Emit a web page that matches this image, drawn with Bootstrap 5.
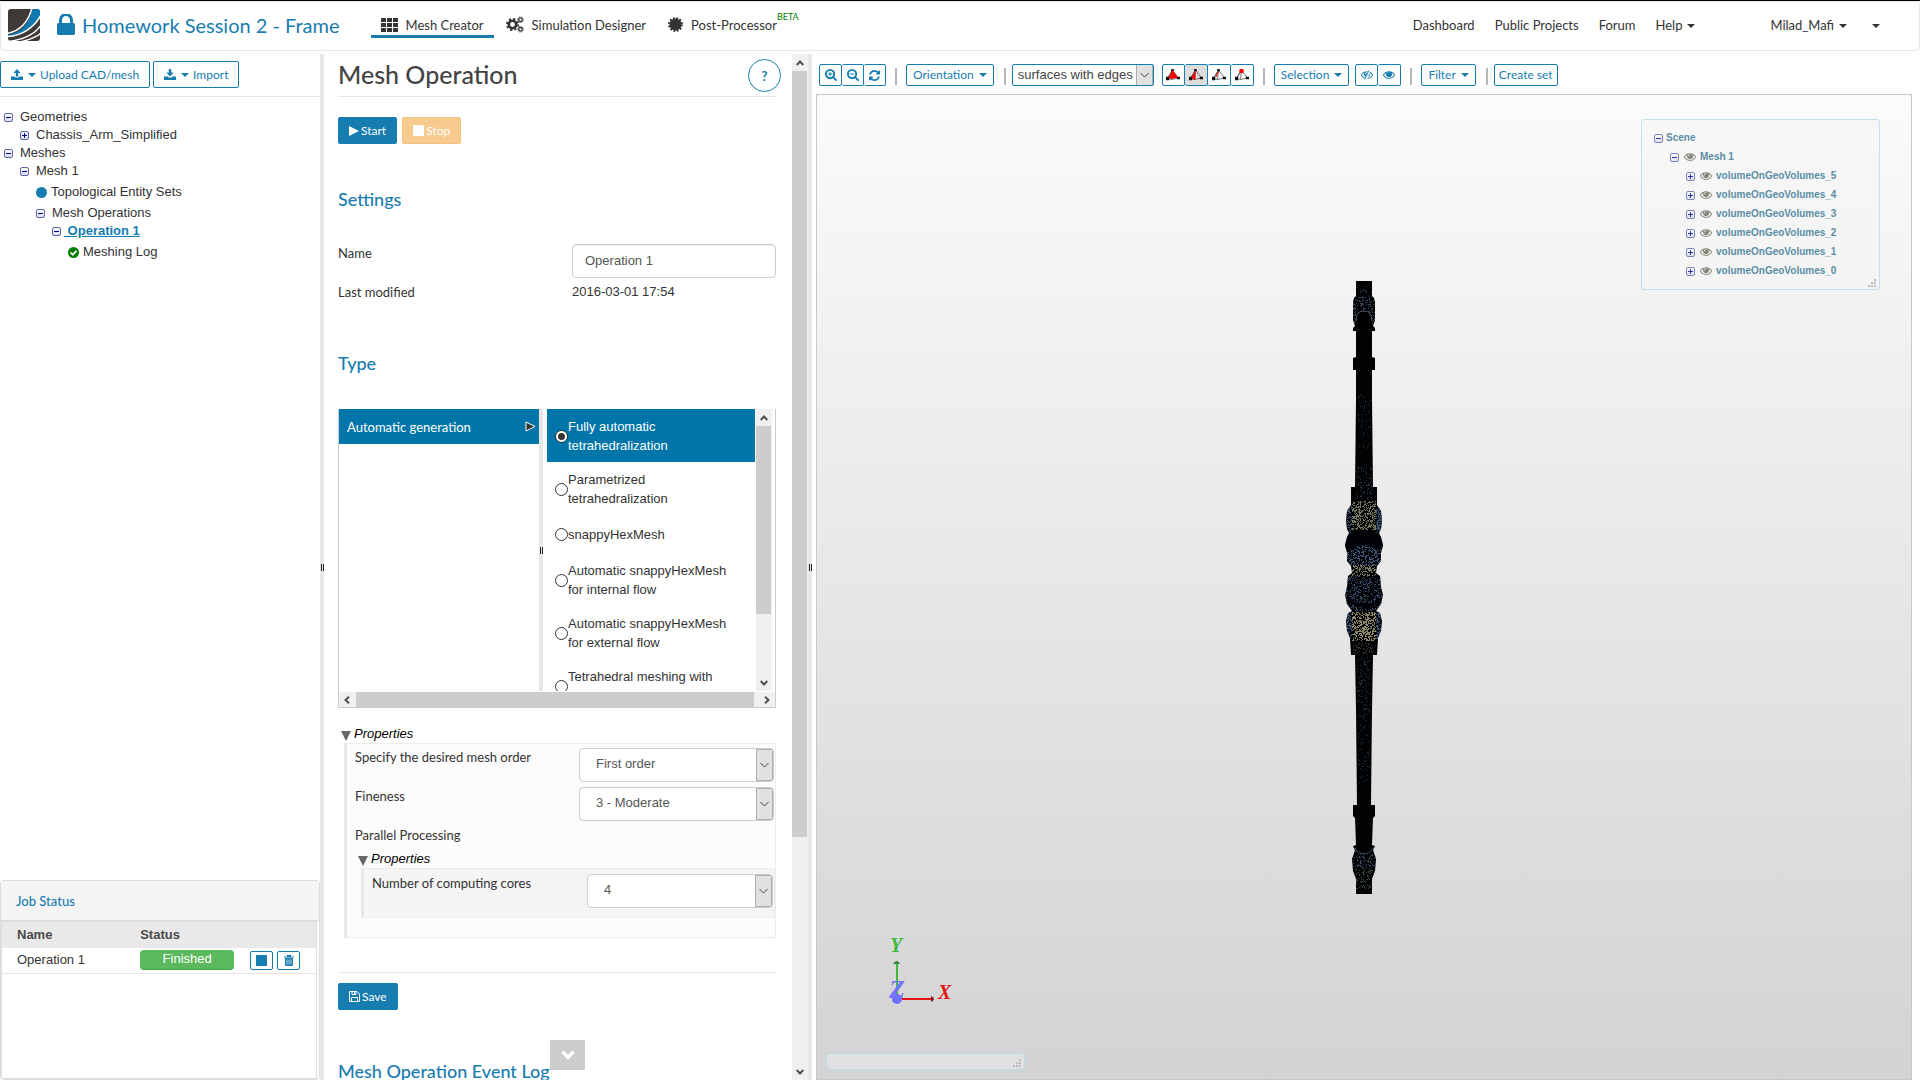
<!DOCTYPE html>
<html lang="en">
<head>
<meta charset="utf-8">
<meta name="viewport" content="width=device-width, initial-scale=1">
<title>Homework Session 2 - Frame</title>
<link href="https://cdn.jsdelivr.net/npm/bootstrap@5.3.0/dist/css/bootstrap.min.css" rel="stylesheet">
<style>
:root { --sim: #177cb0; --line: #e7e7e7; --sel: #0075a9; }
body { font: 13px/18px "Liberation Sans", Arial, sans-serif; color: #333; height: 100vh; overflow: hidden; border-top: 1px solid #000; }
.lato, .lato .nav-link, .tool { font-family: Lato, sans-serif; }
a { color: var(--sim); }
svg { display: block; flex: none; fill: currentColor; }

/* header */
.topbar { height: 50px; border: 1px solid var(--line); border-radius: 4px; padding: 0 29px 2px 7px; }
.brand-title { font-size: 20px; line-height: 24px; color: var(--sim); text-decoration: none; gap: 7px; margin: 0 31px 0 17px; padding-bottom: 1px; }
.topbar .nav-link { color: #333; font-size: 13px; line-height: 20px; padding: 0 10px; }
.topbar .modes { gap: 2px; }
.topbar .modes .nav-link { display: flex; align-items: center; gap: 8px; height: 35px; padding-top: 11px; margin-top: 1px; border-bottom: 3px solid transparent; }
.topbar .modes .nav-link.active { border-color: var(--sim); }
.beta-tag { font-size: 9px; line-height: 10px; color: green; margin: -16px 0 0 -8px; }
.tri::after { content: ""; display: inline-block; margin-left: 5px; vertical-align: 2px; border: 4px solid transparent; border-top-color: currentColor; border-bottom: 0; }
.user-nav { margin-left: 55px; }

/* workspace */
.workspace { display: grid; grid-template-columns: 320px 4px 484px 4px minmax(0, 1fr); flex: 1 1 0; min-height: 0; margin-top: 3px; }
.divider { background: var(--line); display: flex; align-items: center; justify-content: center; }
.divider::after { content: ""; width: 3px; height: 7px; border: solid #222; border-width: 0 1px; }

.tool { font-size: 12px; line-height: 18px; border: 1px solid var(--sim); border-radius: 2px; color: var(--sim); background: #fff; padding: 0 6px; display: inline-flex; align-items: center; justify-content: center; }
.tool.big { height: 27px; padding: 0 10px; }
.tool.solid { background: var(--sim); color: #fff; gap: 2px; }
.tool.warn { background: #f7ca8d; border-color: #f5c37f; color: #fff; gap: 2px; }

/* project tree */
.tree-tools { height: 43px; padding-top: 7px; gap: 3px; border-bottom: 1px solid var(--line); }
.tree-tools .tool { gap: 4px; }
.tree-tools .tri::after { margin-left: 1px; }
.tree { list-style: none; margin: 0; padding: 0 0 0 16px; }
.tree.root { padding: 11px 0 0 4px; }
.tree .line { display: flex; align-items: center; height: 18px; gap: 7px; }
.tree .line.leaf { height: 24px; gap: 4px; }
.tree .line.current { gap: 3px; }
.toggle { width: 9px; height: 9px; flex: none; padding: 0; border: 1px solid #5a68b0; border-radius: 2px; background: linear-gradient(#00009c, #00009c) center / 5px 1px no-repeat, linear-gradient(#fff, #d8dcee); margin-top: 1px; }
.toggle.plus { background: linear-gradient(#00009c, #00009c) center / 5px 1px no-repeat, linear-gradient(#00009c, #00009c) center / 1px 5px no-repeat, linear-gradient(#fff, #d8dcee); }

/* job list */
.jobs { height: 200px; border: 1px solid #ddd; border-radius: 4px; }
.jobs h2 { font-size: 13px; line-height: 20px; color: var(--sim); background: #f5f5f5; height: 40px; margin: 0; padding: 10px 15px; border-bottom: 1px solid #ddd; }
.jobs .frame { border: 1px solid #ddd; margin-right: 2px; flex: 1; }
.jobs table { width: 100%; table-layout: fixed; }
.jobs th { height: 26px; background: #e9e9e9; color: #4a4a4a; padding: 0 0 0 15px; }
.jobs th:first-child { width: 44%; }
.jobs th:nth-child(2) { width: 35%; }
.jobs td { height: 25px; padding: 0 0 0 15px; border-bottom: 1px solid var(--line); }
.jobs th + th, .jobs td + td { padding-left: 0; }
.done-tag { display: block; width: 94px; height: 20px; line-height: 18px; border-radius: 4px; background: #5cb85c; border-bottom: 1px solid #43a047; color: #fff; text-align: center; }
.jobs .tool { height: 19px; width: 23px; padding: 0; }

/* settings form */
.form-pane { flex: 1 1 0; min-width: 0; overflow: hidden; padding: 0 16px 0 14px; position: relative; }
.form-pane h1 { font-size: 25px; line-height: 30px; margin: 0; color: #444; }
.titlebar { height: 43px; border-bottom: 1px solid var(--line); padding-top: 5px; }
.help { width: 33px; height: 33px; border-radius: 50%; border: 1px solid var(--sim); background: #fff; color: var(--sim); font-size: 13px; font-weight: 700; padding: 0; margin-right: -5px; }
.form-pane h2 { font-size: 18px; line-height: 22px; margin: 0; color: var(--sim); }
.run-row { margin-top: 20px; gap: 5px; }
.lab { font-size: 13px; line-height: 18px; }
.field { display: flex; justify-content: space-between; align-items: flex-start; height: 39px; }
.box-in { height: 34px; border: 1px solid #ccc; border-radius: 4px; padding: 0 12px 2px; font-size: 13px; color: #555; width: 204px; box-shadow: inset 0 1px 1px rgba(0,0,0,.075); }
.pick { appearance: none; height: 34px; border: 1px solid #ccc; border-radius: 4px; padding: 0 22px 2px 16px; font-size: 13px; color: #555;
  background: url("data:image/svg+xml,%3Csvg xmlns='http://www.w3.org/2000/svg' width='17' height='32'%3E%3Cpath d='M.5.5h16v31H.5z' fill='%23e1e1e1' stroke='%23adadad'/%3E%3Cpath d='M4.500 14l4 4 4-4' fill='none' stroke='%23444'/%3E%3C/svg%3E") right center no-repeat #fff; }
.types { height: 299px; border: 1px solid #ccc; border-top: 0; overflow: hidden; }
.types .kinds { width: 200px; flex: none; }
.types .kinds button { width: 100%; height: 35px; border: 0; background: var(--sel); color: #fff; padding: 0 3px 0 8px; font-size: 13px; text-align: left; }
.types .divider { width: 4px; flex: none; }
.choice { display: flex; align-items: center; min-height: 38px; padding: 8px 16px 7px 8px; line-height: 19px; }
.choice.narrow { padding-right: 40px; }
.choice.on { background: var(--sel); color: #fff; }
.choice input { appearance: none; flex: none; width: 13px; height: 13px; margin: 0; border: 1px solid #333; border-radius: 50%; background: #fff; }
.choice input:checked { background: radial-gradient(circle, #333 0 3px, #fff 4px); }
.vbar { width: 16px; flex: none; background: #f0f0f0; color: #505050; display: flex; flex-direction: column; align-items: center; }
.vbar svg:first-child { margin: 6px 0 5px; }
.vbar svg:last-child { margin: auto 0 5px; }
.vbar i { width: 15px; background: #cdcdcd; align-self: flex-start; }
.hbar { height: 15px; background: #f0f0f0; color: #505050; display: flex; align-items: center; padding: 0 5px; gap: 6px; margin-top: 1px; }
.hbar i { flex: 1; height: 15px; background: #cdcdcd; }
.vbar svg, .hbar svg, .more svg { fill: none; stroke: currentColor; stroke-width: 2; }
summary { list-style: none; display: flex; align-items: center; gap: 3px; font-style: italic; color: #000; }
summary::before { content: ""; margin-top: 3px; border: solid transparent; border-width: 10px 5px 0; border-top-color: #666; }
.props { border: 1px solid #eee; border-left: 3px solid var(--line); background: #fcfcfc; margin-left: 3px; padding: 4px 1px 19px 8px; }
.props .props { background: #f5f5f5; padding: 5px 1px 4px 8px; margin-right: -1px; }
.form-foot { border-top: 1px solid var(--line); margin-top: 34px; padding-top: 10px; }
.more { position: absolute; left: 226px; bottom: 10px; width: 35px; height: 30px; border: 0; background: #ccc; color: #fff; display: flex; align-items: center; justify-content: center; }

/* 3D view */
.view-tools { height: 40px; padding: 10px 0 8px 7px; }
.view-tools .tool { height: 22px; }
.view-tools .tool.ic { width: 23px; padding: 0; }
.view-tools .btn-group .tool + .tool { margin-left: 0; border-left: 0; width: 22px; }
.view-tools .shade .tool + .tool, .view-tools .seen .tool + .tool { width: 23px; }
.bar { width: 2px; height: 17px; background: #bcb3b8; flex: none; margin: 2px 9px 0; }
.bar.tight { margin: 2px 6px 0 10px; }
.view-tools .pick { width: 142px; height: 22px; border-color: var(--sim); border-radius: 2px; padding: 0 18px 0 5px; color: #444; }
.canvas3d { flex: 1; margin: 0 8px 0 4px; border: 1px solid #c8c8c8; background: linear-gradient(#fbfbfb, #d3d3d3); position: relative; }
.glass { position: absolute; border: 1px solid rgba(173,216,230,.75); border-radius: 4px; background: rgba(245,245,245,.6); }
.scene { right: 31px; top: 24px; width: 239px; height: 171px; padding: 8px 12px; font-size: 10px; font-weight: 700; color: #5b8ea6; }
.scene .tree { padding-left: 16px; }
.scene .tree.root { padding: 0; }
.scene .line { height: 19px; gap: 4px; }
.scene .root > li > .line { gap: 2px; }
.scene .line .toggle { opacity: .8; margin: 2px 1px 0 0; }
.scene .line svg { color: #858578; }
.message { left: 9px; bottom: 9px; width: 199px; height: 17px; background: rgba(245,245,245,.4); }
.grip { position: absolute; right: 3px; bottom: 2px; fill: #bbb; }
.axes { position: absolute; left: 60px; bottom: 69px; }
.axes text { font: italic 700 20px "Liberation Serif", serif; }
</style>
<script src="https://cdn.jsdelivr.net/npm/bootstrap@5.3.0/dist/js/bootstrap.bundle.min.js"></script>
</head>
<body class="d-flex flex-column">

<svg width="0" height="0" class="position-absolute" aria-hidden="true">
  <defs>
    <symbol id="i-lock" viewBox="0 256 1152 1280"><path d="M320 768h512v-192q0-106-75-181t-181-75-181 75-75 181v192zm832 96v576q0 40-28 68t-68 28h-960q-40 0-68-28t-28-68v-576q0-40 28-68t68-28h32v-192q0-184 132-316t316-132 316 132 132 316v192h32q40 0 68 28t28 68z"/></symbol>
    <symbol id="i-eye" viewBox="0 384 1792 1152"><path d="M1664 960q-152-236-381-353 61 104 61 225 0 185-131.500 316.500t-316.500 131.500-316.500-131.500-131.500-316.500q0-121 61-225-229 117-381 353 133 205 333.500 326.500t434.500 121.500 434.500-121.500 333.500-326.500zm-720-384q0-20-14-34t-34-14q-125 0-214.500 89.500t-89.500 214.500q0 20 14 34t34 14 34-14 14-34q0-86 61-147t147-61q20 0 34-14t14-34zm848 384q0 34-20 69-140 230-376.500 368.500t-499.500 138.500-499.500-139-376.500-368q-20-35-20-69t20-69q140-229 376.500-368t499.500-139 499.500 139 376.500 368q20 35 20 69z"/></symbol>
    <symbol id="i-plus" viewBox="0 0 1664 1664"><path d="M1024 672v64q0 13-9.500 22.500t-22.500 9.500h-224v224q0 13-9.500 22.500t-22.500 9.500h-64q-13 0-22.500-9.500t-9.500-22.500v-224h-224q-13 0-22.500-9.500t-9.500-22.500v-64q0-13 9.500-22.500t22.500-9.500h224v-224q0-13 9.500-22.500t22.500-9.500h64q13 0 22.500 9.500t9.500 22.500v224h224q13 0 22.500 9.500t9.500 22.500z"/><use href="#i-glass"/></symbol>
    <symbol id="i-minus" viewBox="0 0 1664 1664"><path d="M1024 672v64q0 13-9.500 22.500t-22.500 9.500h-576q-13 0-22.500-9.500t-9.500-22.500v-64q0-13 9.500-22.500t22.500-9.500h576q13 0 22.500 9.500t9.500 22.500z"/><use href="#i-glass"/></symbol>
    <path id="i-glass" d="M1152 704q0-185-131.500-316.500t-316.500-131.500-316.500 131.500-131.500 316.500 131.500 316.500 316.500 131.500 316.500-131.500 131.500-316.500zm512 832q0 53-37.500 90.500t-90.500 37.500q-54 0-90-38l-343-342q-179 124-399 124-143 0-273.500-55.500t-225-150-150-225-55.500-273.500 55.500-273.500 150-225 225-150 273.500-55.500 273.500 55.500 225 150 150 225 55.500 273.500q0 220-124 399l343 343q37 37 37 90z"/>
    <symbol id="i-refresh" viewBox="128 128 1536 1536"><path d="M1639 1056q0 5-1 7-64 268-268 434.500t-478 166.500q-146 0-282.500-55t-243.500-157l-129 129q-19 19-45 19t-45-19-19-45v-448q0-26 19-45t45-19h448q26 0 45 19t19 45-19 45l-137 137q71 66 161 102t187 36q134 0 250-65t186-179q11-17 53-117 8-23 30-23h192q13 0 22.500 9.500t9.500 22.500zm25-800v448q0 26-19 45t-45 19h-448q-26 0-45-19t-19-45 19-45l138-138q-148-137-349-137-134 0-250 65t-186 179q-11 17-53 117-8 23-30 23h-199q-13 0-22.500-9.500t-9.500-22.500v-7q65-268 270-434.500t480-166.500q146 0 284 55.500t245 156.500l130-129q19-19 45-19t45 19 19 45z"/></symbol>
    <symbol id="i-load" viewBox="0 0 12 11"><path d="M0 7.500h3.600l.9 1h3l.9-1H12V11H0z"/></symbol>
    <symbol id="i-tetra" viewBox="0 0 14 12"><path d="M6.500 1 1.500 9.500l4 1L12.500 9zM6.500 1l-1 9.500" fill="none" stroke="#555" stroke-width=".8"/><path d="M6.500 1l-5 8.500M0 8h3v3H0zm11 0h3v2h-3zM5.500 0h2v2h-2z" fill="#111" stroke="#111" stroke-width=".5"/></symbol>
    <symbol id="i-grip" viewBox="0 0 8 8"><path d="M6 0h2v2H6zM3 3h2v2H3zM6 3h2v2H6zM0 6h2v2H0zM3 6h2v2H3zM6 6h2v2H6z"/></symbol>
    <symbol id="i-up" viewBox="0 0 8 6"><path d="M.7 5 4 1.500 7.300 5"/></symbol>
    <symbol id="i-down" viewBox="0 0 8 6"><path d="M.7 1 4 4.500 7.300 1"/></symbol>
  </defs>
</svg>

<header class="topbar d-flex align-items-center lato">
  <svg width="32" height="32" viewBox="0 0 32 32" role="img" aria-label="SimScale">
    <clipPath id="lg"><rect width="32" height="32" rx="3"/></clipPath>
    <g clip-path="url(#lg)"><rect width="32" height="32" fill="#3f3a37"/>
      <path d="M-1 26C12 24 20 17 25-1H33V6C28 17 14 27-1 28z" fill="#1279ae"/>
      <path d="M-1 24.500C12 22 20 14 24-1M-1 27.500C14 27 27 18 33 6M0 32.500C12 31 26 27 33 16M9 34C18 31 27 30 33 24" fill="none" stroke="#fff" stroke-width="1.500"/></g>
  </svg>
  <a class="brand-title d-flex align-items-center" href="#"><svg width="18" height="22"><use href="#i-lock"/></svg>Homework Session 2 - Frame</a>
  <nav class="nav modes align-self-start" aria-label="Modes">
    <a class="nav-link active" href="#"><svg width="17" height="14" viewBox="0 0 17 14"><path d="M1 0h3.500q.5 0 .5.500v3q0 .5-.5.500H.5Q0 4 0 3.500v-3Q0 0 .5 0zM6 0h5v4H6zM12 0h5v4h-5zM0 5h5v4H0zM6 5h5v4H6zM12 5h5v4h-5zM0 10h5v4H0zM6 10h5v4H6zM12 10h5v4h-5z"/></svg>Mesh Creator</a>
    <a class="nav-link" href="#"><svg width="18" height="17" viewBox="0 0 18 17" style="fill:none" stroke="currentColor"><circle cx="6.500" cy="8.500" r="3.700" stroke-width="2.600"/><circle cx="6.500" cy="8.500" r="5.600" stroke-width="1.800" stroke-dasharray="2.200 2.200"/><circle cx="14.500" cy="3.700" r="1.800" stroke-width="1.300"/><circle cx="14.500" cy="3.700" r="2.800" stroke-width="1" stroke-dasharray="1.100 1.100"/><circle cx="14.500" cy="13.300" r="1.800" stroke-width="1.300"/><circle cx="14.500" cy="13.300" r="2.800" stroke-width="1" stroke-dasharray="1.100 1.100"/></svg>Simulation Designer</a>
    <a class="nav-link" href="#"><svg width="15" height="15" viewBox="0 0 15 15"><circle cx="7.500" cy="7.500" r="6"/><circle cx="7.500" cy="7.500" r="6.500" fill="none" stroke="currentColor" stroke-width="1.800" stroke-dasharray="1.900 1.500"/></svg>Post-Processor<span class="beta-tag">BETA</span></a>
  </nav>
  <nav class="nav ms-auto" aria-label="Site">
    <a class="nav-link" href="#">Dashboard</a><a class="nav-link" href="#">Public Projects</a><a class="nav-link" href="#">Forum</a><a class="nav-link tri" href="#">Help</a>
  </nav>
  <nav class="nav user-nav" aria-label="Account"><a class="nav-link tri" href="#">Milad_Mafi</a><a class="nav-link tri" href="#" aria-label="More"></a></nav>
</header>

<div class="workspace">
  <aside class="d-flex flex-column">
    <div class="tree-tools d-flex align-items-start">
      <button class="tool big" type="button"><svg width="12" height="11" viewBox="0 0 12 11"><use href="#i-load"/><path d="M6 0l3.600 4H7.200v3.500H4.800V4H2.400z"/></svg><span class="tri"></span>Upload CAD/mesh</button>
      <button class="tool big" type="button"><svg width="12" height="11" viewBox="0 0 12 11"><use href="#i-load"/><path d="M6 7.500l3.600-4H7.200V0H4.800v3.500H2.400z"/></svg><span class="tri"></span>Import</button>
    </div>
    <ul class="tree root">
      <li><div class="line"><button class="toggle" aria-label="Collapse"></button>Geometries</div>
        <ul class="tree"><li><div class="line"><button class="toggle plus" aria-label="Expand"></button>Chassis_Arm_Simplified</div></li></ul></li>
      <li><div class="line"><button class="toggle" aria-label="Collapse"></button>Meshes</div>
        <ul class="tree"><li><div class="line"><button class="toggle" aria-label="Collapse"></button>Mesh 1</div>
          <ul class="tree">
            <li><div class="line leaf"><svg width="11" height="11" viewBox="0 0 11 11"><circle cx="5.500" cy="5.500" r="5.500" fill="#177cb0"/></svg>Topological Entity Sets</div></li>
            <li><div class="line"><button class="toggle" aria-label="Collapse"></button>Mesh Operations</div>
              <ul class="tree"><li><div class="line current"><button class="toggle" aria-label="Collapse"></button><a class="fw-bold" href="#">&nbsp;Operation 1</a></div>
                <ul class="tree"><li><div class="line leaf"><svg width="11" height="11" viewBox="0 0 11 11"><circle cx="5.500" cy="5.500" r="5.500" fill="green"/><path d="M2.500 5.500l2.300 2.200 3.700-3.900" fill="none" stroke="#fff" stroke-width="1.700"/></svg>Meshing Log</div></li></ul></li></ul></li>
          </ul></li></ul></li>
    </ul>
    <section class="jobs mt-auto d-flex flex-column">
      <h2 class="lato">Job Status</h2>
      <div class="frame"><table>
        <thead><tr><th scope="col">Name</th><th scope="col">Status</th><th></th></tr></thead>
        <tbody><tr><td>Operation 1</td><td><span class="done-tag">Finished</span></td>
          <td><div class="d-flex gap-1"><button class="tool" type="button" aria-label="Stop"><svg width="11" height="11" viewBox="0 0 11 11"><path d="M0 0h11v11H0z"/></svg></button><button class="tool" type="button" aria-label="Delete"><svg width="10" height="11" viewBox="0 0 10 11"><path d="M3 1.500V0h4v1.500h3v1H0v-1zM1 3h8v7q0 1-1 1H2q-1 0-1-1z"/><path d="M3 4.500v5M5 4.500v5M7 4.500v5" stroke="#fff" stroke-width=".7"/></svg></button></div></td></tr></tbody>
      </table></div>
    </section>
  </aside>
  <div class="divider"></div>

  <div class="d-flex" style="min-height:0">
    <main class="form-pane">
      <div class="titlebar d-flex justify-content-between"><h1 class="lato">Mesh Operation</h1><button class="help lato" type="button">?</button></div>
      <div class="run-row d-flex">
        <button class="tool big solid" type="button"><svg width="10" height="10" viewBox="0 0 10 10"><path d="M0 0l10 5-10 5z"/></svg>Start</button>
        <button class="tool big warn" type="button"><svg width="11" height="11" viewBox="0 0 11 11"><path d="M0 0h11v11H0z"/></svg>Stop</button>
      </div>
      <h2 class="lato" style="margin:44px 0 34px">Settings</h2>
      <div class="field"><label class="lab lato" for="nm">Name</label><input class="box-in" id="nm" value="Operation 1"></div>
      <div class="field"><span class="lab lato">Last modified</span><span style="width:204px">2016-03-01 17:54</span></div>
      <h2 class="lato" style="margin:30px 0 35px">Type</h2>
      <div class="types d-flex flex-column">
        <div class="d-flex flex-grow-1" style="min-height:0">
          <div class="kinds"><button type="button" class="lato d-flex justify-content-between align-items-center">Automatic generation<svg width="11" height="11" viewBox="0 0 11 11"><path d="M1 1l9 4.500L1 10z" fill="#333" stroke="#fff"/></svg></button></div>
          <div class="divider"></div>
          <div class="flex-fill overflow-hidden ps-1" style="width:0">
            <label class="choice narrow on"><input type="radio" name="kind" checked><span>Fully automatic tetrahedralization</span></label>
            <label class="choice narrow"><input type="radio" name="kind"><span>Parametrized tetrahedralization</span></label>
            <label class="choice"><input type="radio" name="kind"><span>snappyHexMesh</span></label>
            <label class="choice"><input type="radio" name="kind"><span>Automatic snappyHexMesh for internal flow</span></label>
            <label class="choice"><input type="radio" name="kind"><span>Automatic snappyHexMesh for external flow</span></label>
            <label class="choice narrow"><input type="radio" name="kind"><span>Tetrahedral meshing with advanced color mapping</span></label>
          </div>
          <div class="vbar" style="margin:0 3px 0 1px"><svg width="8" height="6"><use href="#i-up"/></svg><i style="height:188px"></i><svg width="8" height="6"><use href="#i-down"/></svg></div>
        </div>
        <div class="hbar"><svg width="6" height="8" viewBox="0 0 6 8"><path d="M5 .7 1.500 4 5 7.300"/></svg><i></i><svg width="6" height="8" viewBox="0 0 6 8" class="ms-1"><path d="M1 .7 4.500 4 1 7.300"/></svg></div>
      </div>
      <details open style="margin:17px 0 0 3px"><summary>Properties</summary>
        <div class="props">
          <div class="field"><label class="lab lato" for="ord">Specify the desired mesh order</label><select id="ord" class="pick" style="width:195px"><option>First order</option></select></div>
          <div class="field"><label class="lab lato" for="fin">Fineness</label><select id="fin" class="pick" style="width:195px"><option>3 - Moderate</option></select></div>
          <div class="lab lato" style="padding-bottom:6px">Parallel Processing</div>
          <details open style="margin-left:3px"><summary>Properties</summary>
            <div class="props">
              <div class="field"><label class="lab lato" for="cores">Number of computing cores</label><select id="cores" class="pick" style="width:186px"><option>4</option></select></div>
            </div>
          </details>
        </div>
      </details>
      <div class="form-foot"><button class="tool big solid" type="button"><svg width="11" height="11" viewBox="0 0 11 11" style="fill:none;stroke:#fff"><path d="M.5.5h7.500l2.500 2.500v7.500H.5zM3 .5v3h4v-3M5.500 1v2M2.500 10.500v-4h6v4"/></svg>Save</button></div>
      <h2 class="lato" style="margin-top:50px">Mesh Operation Event Log</h2>
      <button class="more" type="button" aria-label="Scroll down"><svg width="14" height="10" viewBox="0 0 8 6"><use href="#i-down"/></svg></button>
    </main>
    <div class="vbar"><svg width="8" height="6"><use href="#i-up"/></svg><i style="height:74.7%"></i><svg width="8" height="6"><use href="#i-down"/></svg></div>
  </div>
  <div class="divider"></div>

  <section class="d-flex flex-column">
    <div class="view-tools d-flex align-items-center">
      <div class="btn-group"><button class="tool ic" aria-label="Zoom in"><svg width="12" height="12"><use href="#i-plus"/></svg></button><button class="tool ic" aria-label="Zoom out"><svg width="12" height="12"><use href="#i-minus"/></svg></button><button class="tool ic" aria-label="Refresh"><svg width="11" height="11"><use href="#i-refresh"/></svg></button></div>
      <span class="bar"></span>
      <button class="tool tri" type="button">Orientation</button>
      <span class="bar tight"></span>
      <select class="pick" aria-label="Render mode"><option>surfaces with edges</option></select>
      <div class="btn-group shade ms-2">
        <button class="tool ic" aria-label="Pick volumes"><svg width="14" height="12" viewBox="0 0 14 12"><use href="#i-tetra"/><path d="M6.500 1l-4 8 3 1L12 8.500z" fill="red"/></svg></button>
        <button class="tool ic" style="background:#ddd" aria-label="Pick faces"><svg width="14" height="12" viewBox="0 0 14 12"><use href="#i-tetra"/><path d="M6 2.500L3 9l3 1.500z" fill="red" stroke="red"/></svg></button>
        <button class="tool ic" aria-label="Pick edges"><svg width="14" height="12" viewBox="0 0 14 12"><use href="#i-tetra"/><path d="M6 3L4 8" stroke="red"/></svg></button>
        <button class="tool ic" aria-label="Pick nodes"><svg width="14" height="12" viewBox="0 0 14 12"><use href="#i-tetra"/><circle cx="6.500" cy="2" r="2.300" fill="red"/></svg></button>
      </div>
      <span class="bar"></span>
      <button class="tool tri" type="button">Selection</button>
      <div class="btn-group seen" style="margin-left:6px"><button class="tool ic" aria-label="Hide"><svg width="12" height="10" viewBox="0 0 12 10"><svg y="1" width="12" height="8"><use href="#i-eye"/></svg><path d="M4.500 10l4-10" stroke="#fff" stroke-width="2.500"/><path d="M3.800 9.500l4-9" stroke="currentColor"/></svg></button><button class="tool ic" aria-label="Show"><svg width="12" height="8" viewBox="0 0 12 8"><use href="#i-eye"/><circle cx="6" cy="3.500" r="2.300"/></svg></button></div>
      <span class="bar"></span>
      <button class="tool tri" type="button">Filter</button>
      <span class="bar tight"></span>
      <button class="tool px-1" type="button">Create set</button>
    </div>
    <div class="canvas3d d-flex align-items-center justify-content-center">
      <svg width="40" height="616" viewBox="1344 280 40 616" role="img" aria-label="Mesh model">
        <clipPath id="body-clip"><polygon class="outline"/></clipPath>
        <polygon class="outline" fill="#010204"/>
        <g id="specks" clip-path="url(#body-clip)"></g>
      </svg>

      <div class="glass scene">
        <ul class="tree root"><li><div class="line"><button class="toggle" aria-label="Collapse"></button>Scene</div>
          <ul class="tree"><li><div class="line"><button class="toggle" aria-label="Collapse"></button><svg width="12" height="8"><use href="#i-eye"/></svg>Mesh 1</div>
            <ul class="tree" id="volumes"></ul></li></ul></li></ul>
        <svg class="grip" width="8" height="8"><use href="#i-grip"/></svg>
      </div>

      <svg class="axes" width="90" height="80" viewBox="877 930 90 80" role="img" aria-label="Axes">
        <path d="M896 964h2v34h-2z" fill="#40b840"/><path d="M893 964q4-6 7 0z" fill="#3c8040"/>
        <path d="M898 998h34v2h-34z" fill="#e51414"/><path d="M931 996q6 3 0 6z" fill="#8a1010"/>
        <circle cx="897" cy="999" r="5" fill="#6f6ffa"/>
        <text x="890" y="952" fill="#40b840">Y</text><text x="938" y="999" fill="#e51414">X</text><text x="889" y="998" fill="#7474fa" style="font-size:26px">Z</text>
      </svg>
      <div class="glass message"><svg class="grip" width="8" height="8"><use href="#i-grip"/></svg></div>
    </div>
  </section>
</div>

<script>
// Volumes of the mesh, newest first
document.getElementById('volumes').innerHTML = [5, 4, 3, 2, 1, 0].map(n =>
  `<li><div class="line"><button class="toggle plus" aria-label="Expand"></button><svg width="12" height="8"><use href="#i-eye"/></svg>volumeOnGeoVolumes_${n}</div></li>`).join('');

// Silhouette: the half width of the arm at each height, mirrored about its axis
const axis = 1364;
const profile = [[8,282],[8,297],[10,299],[11,303],[11,321],[9,327],[11,329],[11,332],[8,332],[8,358],[11,359],[11,371],[8,371],
  [8,400],[9,488],[13,488],[13,506],[17,512],[18,522],[17,530],[15,534],[17,538],[19,546],[17,554],[17,562],[13,567],[12,574],[16,577],
  [17,588],[19,596],[17,605],[12,612],[16,614],[18,622],[17,632],[14,639],[13,656],[9,656],[8,710],[7,806],[11,806],[11,817],[9,819],
  [8,846],[11,847],[9,851],[12,860],[11,872],[8,880],[8,895]];
const points = profile.map(([w, y]) => `${axis + w},${y}`).concat(profile.slice().reverse().map(([w, y]) => `${axis - w},${y}`)).join(' ');
document.querySelectorAll('.outline').forEach(p => p.setAttribute('points', points));

// Mesh facets that show between the edges: [x0, y0, x1, y1, density, colour]
let seed = 7;
const rnd = () => (seed = (seed * 16807) % 2147483647) / 2147483647;
const bands = [
  [1356, 285, 1372, 300, .12, '#26303c'], [1352, 298, 1376, 326, .22, '#36485c'],
  [1356, 395, 1371, 450, .08, '#222a33'], [1356, 468, 1372, 500, .15, '#2b3440'],
  [1346, 506, 1352, 534, .45, '#3c5470'], [1376, 506, 1382, 534, .45, '#3c5470'],
  [1352, 502, 1376, 531, .42, '#77745c'], [1347, 545, 1381, 566, .35, '#3c5578'],
  [1352, 566, 1376, 577, .42, '#77745c'], [1346, 577, 1382, 612, .28, '#324866'],
  [1346, 614, 1352, 640, .45, '#3c5470'], [1376, 614, 1382, 640, .45, '#3c5470'],
  [1352, 613, 1376, 642, .48, '#8a8668'], [1353, 643, 1376, 656, .15, '#3a3930'],
  [1357, 658, 1371, 720, .14, '#222d3a'], [1358, 720, 1370, 790, .06, '#26323e'],
  [1352, 848, 1376, 868, .22, '#36485c'], [1355, 868, 1373, 890, .22, '#3a4438']];
let out = '';
for (const [x0, y0, x1, y1, d, c] of bands) {
  let path = '';
  for (let y = y0; y < y1; y++) for (let x = x0; x < x1; x++) if (rnd() < d) path += `M${x} ${y}h1v1h-1z`;
  out += `<path d="${path}" fill="${c}"/>`;
}
out += '<path d="M1356 322q0-10 8-10t8 10v8h-16z" fill="#000"/><path d="M1356 322q0-10 8-10t8 10" fill="none" stroke="#4b5a68"/>';
out += '<path d="M1345 550q0-18 19-18t19 18l-5 1q-14-10-28 0z" fill="#020308"/><path d="M1347 600q17 14 34 0" fill="none" stroke="#020308" stroke-width="3"/>';
out += '<path d="M1356 846h16v4q-8 8-16 0z" fill="#000"/><path d="M1356 851q8 8 16 0" fill="none" stroke="#3b4a58"/>';
document.getElementById('specks').innerHTML = out;
</script>
</body>
</html>
